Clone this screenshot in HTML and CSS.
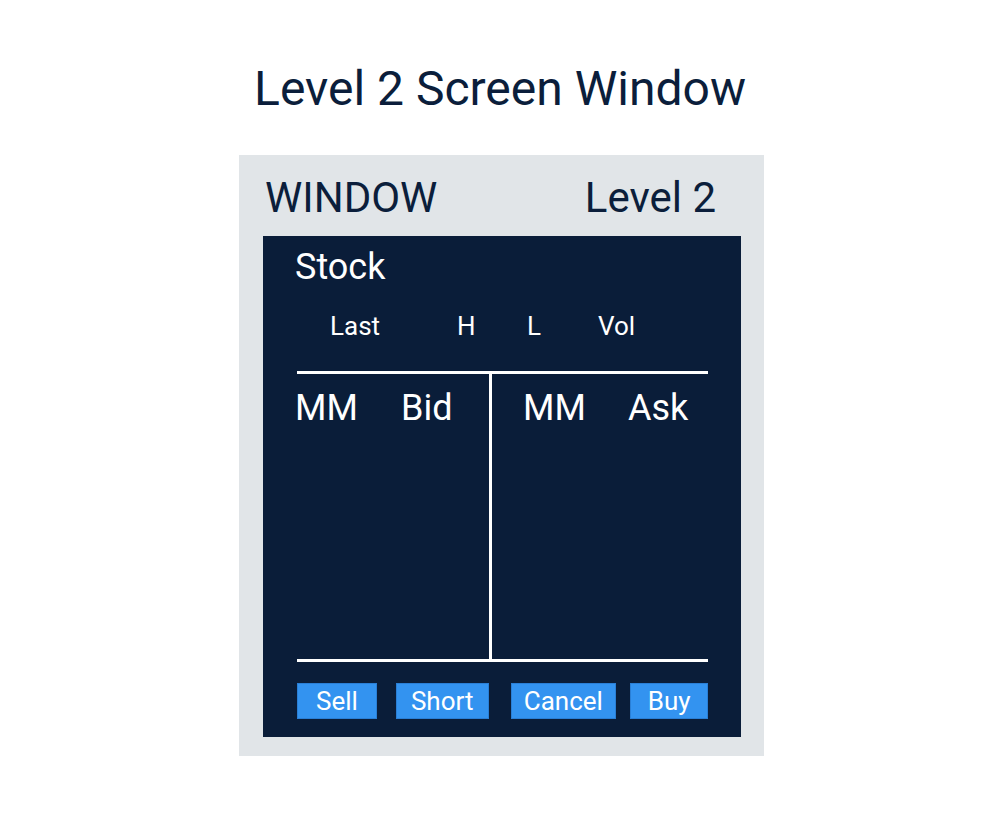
FILE: index.html
```html
<!DOCTYPE html>
<html>
<head>
<meta charset="utf-8">
<link rel="stylesheet" href="styles.css">
</head>
<body>
<h1 class="title">Level 2 Screen Window</h1>
<div class="frame">
  <div class="frame-head">
    <span class="frame-name">WINDOW</span>
    <span class="frame-level">Level 2</span>
  </div>
  <div class="screen">
    <div class="stock">Stock</div>
    <div class="quote">
      <span>Last</span><span>H</span><span>L</span><span>Vol</span>
    </div>
    <div class="book">
      <div class="side side-bid">
        <span class="col-mm">MM</span><span>Bid</span>
      </div>
      <div class="side side-ask">
        <span class="col-mm">MM</span><span>Ask</span>
      </div>
    </div>
    <div class="actions">
      <button class="btn btn-sell">Sell</button>
      <button class="btn btn-short">Short</button>
      <button class="btn btn-cancel">Cancel</button>
      <button class="btn btn-buy">Buy</button>
    </div>
  </div>
</div>
</body>
</html>
```
FILE: styles.css
```css
* { box-sizing: border-box; }
body {
  margin: 0;
  background: #ffffff;
  font-family: Roboto, "Liberation Sans", sans-serif;
  color: #0b1e3b;
}
.title {
  margin: 0;
  padding-top: 59px;
  height: 155px;
  text-align: center;
  font-weight: 400;
  font-size: 48px;
  line-height: 60px;
  color: #0b1e3b;
}
.frame {
  margin-left: 239px;
  width: 525px;
  height: 601px;
  background: #e1e5e8;
  padding: 0 23px 19px 24px;
}
.frame-head {
  height: 81px;
  display: flex;
  justify-content: space-between;
  align-items: flex-start;
  padding: 18px 25px 0 2px;
  font-size: 42px;
  line-height: 50px;
}
.screen {
  background: #0a1d39;
  height: 501px;
  color: #ffffff;
  padding: 0 33px 0 34px;
}
.stock {
  font-size: 36px;
  line-height: 44px;
  padding-top: 9px;
  margin-left: -2px;
  height: 67px;
}
.quote {
  display: grid;
  grid-template-columns: 127px 70px 71px auto;
  padding-left: 33px;
  font-size: 26px;
  line-height: 30px;
  height: 68px;
  padding-top: 8px;
}
.book {
  display: flex;
  height: 291px;
  border-top: 3px solid #ffffff;
  border-bottom: 3px solid #ffffff;
}
.side {
  display: flex;
  font-size: 36px;
  line-height: 44px;
  padding-top: 12px;
}
.side-bid {
  width: 195px;
  border-right: 3px solid #ffffff;
}
.side-bid .col-mm { width: 106px; margin-left: -2px; }
.side-ask { padding-left: 31px; }
.side-ask .col-mm { width: 105px; }
.actions {
  display: flex;
  padding-top: 21px;
}
.btn {
  height: 36px;
  border: none;
  background: #3393f0;
  color: #ffffff;
  font-family: Roboto, "Liberation Sans", sans-serif;
  font-size: 26px;
  line-height: 36px;
  padding: 0;
  box-shadow: 0 0 0 1px #2a7fd6 inset;
}
.btn-sell { width: 80px; }
.btn-short { width: 93px; margin-left: 19px; }
.btn-cancel { width: 106px; margin-left: 22px; }
.btn-buy { width: 78px; margin-left: 14px; }
```
